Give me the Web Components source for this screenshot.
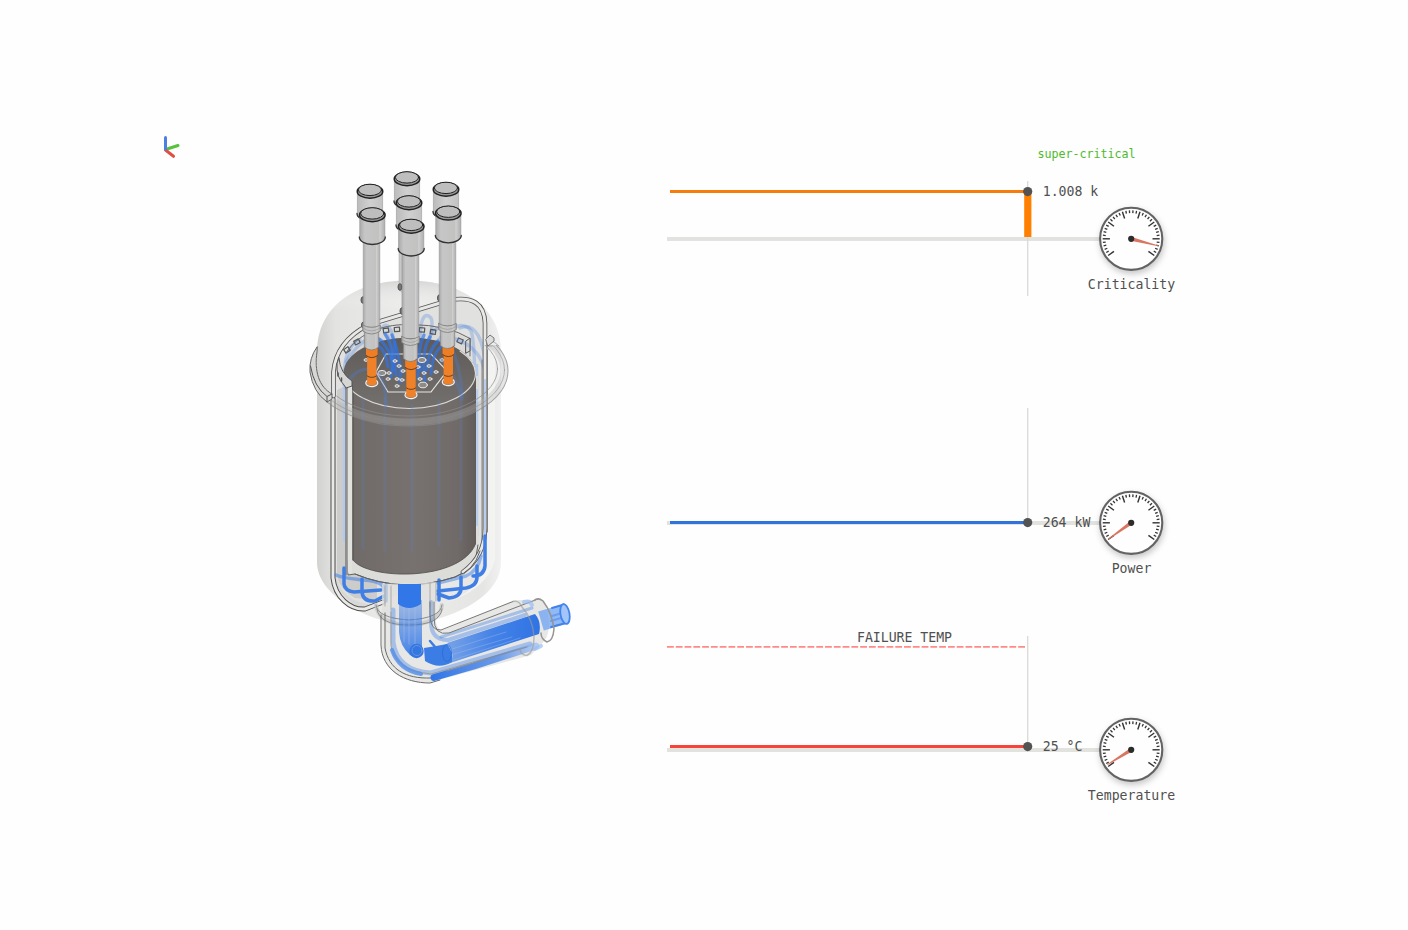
<!DOCTYPE html>
<html lang="en">
<head>
<meta charset="utf-8">
<title>Reactor startup</title>
<style>
    body {
        margin: 0;
        background: #fefefe;
        color: #505050;
        font-family: "DejaVu Sans Mono", "Liberation Mono", monospace;
        font-size: 13.2px;
    }
</style>
</head>
<body>
<reactor-dashboard>
    <reactor-model slot="model"></reactor-model>
    <trace-row height="160" base="99" level="51.5" color="#f67c0c" value="1.008 k" from="41" to="156" status="super-critical" bar>Criticality</trace-row>
    <trace-row height="170" base="115" level="114.5" color="#3173dd" value="264 kW" from="0" to="115">Power</trace-row>
    <trace-row height="180" base="120" level="116.5" color="#f9423a" value="25 °C" from="6" to="117" limit="16.8" limit-label="FAILURE TEMP">Temperature</trace-row>
</reactor-dashboard>

<script>
class ReactorDashboard extends HTMLElement {
    constructor() {
        super();
        this.shadowDOM = this.attachShadow({mode: "open"});
    }

    connectedCallback() {
        this.shadowDOM.innerHTML = `
        <style>
        :host {
            display: flex;
            box-sizing: border-box;
            width: 1408px;
            height: 930px;
            padding: 130px 0 0 150px;
            overflow: hidden;
        }

        .traces {
            display: flex;
            flex-direction: column;
            padding-top: 10px;
        }

        ::slotted(trace-row:nth-of-type(2)) {
            margin: 108px 0 52px;
        }
        </style>
        <slot name="model"></slot>
        <div class="traces"><slot></slot></div>
        `;
    }
}

class TraceRow extends HTMLElement {
    constructor() {
        super();
        this.shadowDOM = this.attachShadow({mode: "open"});
    }

    num(name) {
        return parseFloat(this.getAttribute(name));
    }

    connectedCallback() {
        const base = this.num("base");
        const level = this.num("level");
        const color = this.getAttribute("color");
        const angles = {Criticality: 14.7, Power: 144.5, Temperature: 148};
        const name = this.textContent.trim();

        let extra = "";
        if (this.hasAttribute("bar")) {
            extra += `<rect x="357.2" y="${level}" width="7.2" height="${base - level - 2}" fill="#ff7f00"/>`;
        }
        if (this.hasAttribute("status")) {
            extra += `<text x="370.6" y="18.4" class="status" textLength="98">${this.getAttribute("status")}</text>`;
        }
        if (this.hasAttribute("limit")) {
            const y = this.num("limit");
            extra += `<path d="M0 ${y}H358" stroke="#ff8a86" stroke-width="1.7" stroke-dasharray="6.8 1.98"/>
                <text x="190" y="${y - 4.6}" textLength="95">${this.getAttribute("limit-label")}</text>`;
        }

        this.shadowDOM.innerHTML = `
        <style>
        :host {
            display: flex;
            height: ${this.num("height")}px;
        }

        svg {
            flex: none;
            overflow: visible;
        }

        text {
            fill: #505050;
            font-family: inherit;
            font-size: 13.2px;
        }

        .status {
            fill: #4dbb2c;
            font-size: 11.7px;
        }

        gauge-dial {
            margin-top: ${base - 33}px;
        }
        </style>
        <svg width="420" height="${this.num("height")}" fill="none">
            <path d="M0 ${base}H434" stroke="#e2e2de" stroke-width="4"/>
            <path d="M360.7 ${this.num("from")}V${this.num("to")}" stroke="#dadad8" stroke-width="1.3"/>
            <path d="M3 ${level}H361" stroke="${color}" stroke-width="3.1"/>
            ${extra}
            <circle cx="360.7" cy="${level + .1}" r="4.6" fill="#535353"/>
            <text x="375.7" y="${level + 4.6}">${this.getAttribute("value")}</text>
        </svg>
        <gauge-dial angle="${angles[name]}"><slot></slot></gauge-dial>
        `;
    }
}

class GaugeDial extends HTMLElement {
    constructor() {
        super();
        this.shadowDOM = this.attachShadow({mode: "open"});
    }

    connectedCallback() {
        // 252 degree scale, every fifth tick is a long one
        let ticks = "";
        for (let i = 0; i <= 35; i++) {
            const major = i % 5 === 0;
            ticks += `<path d="M${major ? 21.3 : 25.7} 0H28.5" stroke-width="${major ? 1.4 : 1.3}" transform="rotate(${144 + i * 7.2})"/>`;
        }
        this.shadowDOM.innerHTML = `
        <style>
        :host {
            display: flex;
            flex-direction: column;
            align-items: center;
            width: 88px;
        }

        svg {
            flex: none;
            overflow: visible;
            filter: drop-shadow(1px 3px 3px rgba(0, 0, 0, .22));
        }

        .label {
            margin-top: 5px;
            padding-left: 1px;
            line-height: 16px;
            white-space: nowrap;
        }
        </style>
        <svg width="66" height="66" viewBox="-33.2 -32.8 66 66">
            <circle r="31.1" fill="#fefefe" stroke="#636363" stroke-width="2.1"/>
            <g stroke="#333">${ticks}</g>
            <path d="M0 -1.9L28 -.4V.4L0 1.9Z" fill="#d97560" transform="rotate(${this.getAttribute("angle")})"/>
            <circle r="3.1" fill="#2c2c2c"/>
        </svg>
        <div class="label"><slot></slot></div>
        `;
    }
}

class ReactorModel extends HTMLElement {
    constructor() {
        super();
        this.shadowDOM = this.attachShadow({mode: "open"});
    }

    // actuator can on top of a control rod, x/y is the middle of its lid
    can(x, y, back) {
        const body = back ? "url(#canBack)" : "url(#metal)";
        return `
        <path d="M${x - 12.6} ${y}V${y + 24}A12.6 6.5 0 0 0 ${x + 12.6} ${y + 24}V${y}Z" fill="${body}" stroke="#8b8b8b" stroke-width=".5"/>
        <path d="M${x - 13} ${y + 23}A13 7.5 0 0 0 ${x + 13} ${y + 23}" fill="none" stroke="#333" stroke-width="1.3"/>
        <ellipse cx="${x}" cy="${y + .9}" rx="12.8" ry="6.8" fill="#999" stroke="#222" stroke-width="1.4"/>
        <ellipse cx="${x}" cy="${y - .6}" rx="11.6" ry="5.7" fill="#bebebe" stroke="#222" stroke-width="1"/>`;
    }

    shaft(x, top, collar) {
        return `
        <path d="M${x - 8.3} ${top}V${collar}H${x + 8.3}V${top}Z" fill="url(#metal)" stroke="#929292" stroke-width=".5"/>
        <path d="M${x - 7.2} ${collar + 3}V${collar + 20}Q${x} ${collar + 26} ${x + 7.2} ${collar + 20}V${collar + 3}Z" fill="url(#metal)" stroke="#777" stroke-width=".6"/>
        <path d="M${x - 8.8} ${collar - 2}V${collar + 4}Q${x} ${collar + 10} ${x + 8.8} ${collar + 4}V${collar - 2}Q${x} ${collar + 3} ${x - 8.8} ${collar - 2}Z" fill="url(#metal)" stroke="#7c7c7c" stroke-width=".8"/>
        <path d="M${x - 8.5} ${collar + 1}Q${x} ${collar + 7} ${x + 8.5} ${collar + 1}" fill="none" stroke="#999" stroke-width=".7"/>`;
    }

    absorber(x, top) {
        return `
        <ellipse cx="${x}" cy="${top + 35}" rx="6" ry="3.6" fill="#8c8781" stroke="#f3f3f3" stroke-width="1.2" stroke-dasharray="2 .7"/>
        <path d="M${x - 5.8} ${top - 2}V${top + 8}Q${x} ${top + 11} ${x + 5.8} ${top + 8}V${top - 2}Z" fill="#ee7d23"/>
        <path d="M${x - 4.7} ${top + 9}V${top + 36}Q${x} ${top + 39} ${x + 4.7} ${top + 36}V${top + 9}Z" fill="#ef8128"/>
        <path d="M${x - 5.8} ${top + 7.5}Q${x} ${top + 12} ${x + 5.8} ${top + 7.5}M${x - 4.6} ${top + 28}Q${x} ${top + 31} ${x + 4.6} ${top + 28}M${x - 6} ${top - 1}Q${x} ${top + 3} ${x + 6} ${top - 1}" fill="none" stroke="#5c3c22" stroke-width=".9"/>`;
    }

    render() {
        // window slots around the rim behind the core
        const slots = [[347, 350, -35], [357, 342, -28], [386, 330.5, -8], [397, 329.5, -4], [422, 330, 4], [433, 332, 8], [460, 341, 24]]
            .map(([x, y, r]) => `<path d="M-2.6 -2.2H2.6V2H-2.6Z" transform="translate(${x} ${y}) rotate(${r})"/>`).join("");
        // channels in the core's top face
        const holes = [[395, 361], [422, 360, 4], [382, 373, 4], [389, 373], [397, 379], [388, 379], [424, 373], [436, 372], [430, 379], [420, 379], [397, 386], [423, 385, 4.3], [403, 371], [418, 367], [399, 366], [402, 380], [429, 366], [366, 360], [442, 360]]
            .map(([x, y, r = 2]) => `<ellipse cx="${x}" cy="${y}" rx="${r}" ry="${r * .65}"/>`).join("");

        this.shadowDOM.innerHTML = `
        <style>
        :host {
            display: block;
            flex: none;
            width: 517px;
        }

        svg {
            display: block;
        }
        </style>
        <svg width="517" height="570" viewBox="150 130 517 570" fill="none" stroke-linecap="round" stroke-linejoin="round">
            <defs>
                <linearGradient id="shell">
                    <stop offset="0" stop-color="#d2d2d1"/>
                    <stop offset=".1" stop-color="#e3e3e2"/>
                    <stop offset=".5" stop-color="#ececeb"/>
                    <stop offset=".9" stop-color="#e5e5e4"/>
                    <stop offset="1" stop-color="#f1f1f1"/>
                </linearGradient>
                <linearGradient id="metal">
                    <stop offset="0" stop-color="#aaa"/>
                    <stop offset=".2" stop-color="#c6c6c6"/>
                    <stop offset=".75" stop-color="#c2c2c1"/>
                    <stop offset=".8" stop-color="#cfcfcf"/>
                    <stop offset="1" stop-color="#aeaeae"/>
                </linearGradient>
                <linearGradient id="canBack">
                    <stop offset="0" stop-color="#bbb"/>
                    <stop offset=".5" stop-color="#d0d0d0"/>
                    <stop offset="1" stop-color="#c2c2c2"/>
                </linearGradient>
                <linearGradient id="core">
                    <stop offset="0" stop-color="#706b69"/>
                    <stop offset=".5" stop-color="#77726f"/>
                    <stop offset=".85" stop-color="#706b69"/>
                    <stop offset="1" stop-color="#625d5b"/>
                </linearGradient>
                <linearGradient id="face" x1="0" y1="0" x2="0" y2="1">
                    <stop offset="0" stop-color="#5d5a58"/>
                    <stop offset="1" stop-color="#74706e"/>
                </linearGradient>
                <linearGradient id="domeShade" x1="0" y1="0" x2="0" y2="1">
                    <stop offset="0" stop-color="#c8c8c8" stop-opacity=".6"/>
                    <stop offset=".4" stop-color="#fff" stop-opacity="0"/>
                </linearGradient>
                <linearGradient id="flow">
                    <stop offset="0" stop-color="#3b7de8" stop-opacity=".65"/>
                    <stop offset=".5" stop-color="#3277e7" stop-opacity=".9"/>
                    <stop offset="1" stop-color="#2f73e4"/>
                </linearGradient>
                <linearGradient id="flowLow" gradientUnits="userSpaceOnUse" x1="433" y1="0" x2="543" y2="0">
                    <stop offset="0" stop-color="#3277e7"/>
                    <stop offset=".6" stop-color="#4c87e8" stop-opacity=".8"/>
                    <stop offset="1" stop-color="#9dc0f5" stop-opacity=".6"/>
                </linearGradient>
                <linearGradient id="flowDown" x1="0" y1="0" x2="0" y2="1">
                    <stop offset="0" stop-color="#3c7ce4" stop-opacity=".4"/>
                    <stop offset="1" stop-color="#3277e7" stop-opacity=".9"/>
                </linearGradient>
                <clipPath id="flangeCut">
                    <path d="M327 440V402L332 399L400 345H520V440Z"/>
                </clipPath>
            </defs>

            <!-- axes -->
            <g stroke-width="3">
                <path d="M165.500 149.500L178 145.500" stroke="#57c23c"/>
                <path d="M165.500 150L173.500 156.300" stroke="#dc5146"/>
                <path d="M165.500 149V137.500" stroke="#4c7fe0"/>
            </g>

            <!-- outer vessel -->
            <path d="M317 352C317 306 356 280.500 408 280.500C460 280.500 501 306 501 352V562C501 594 462 616 409 626C362 620 317 594 317 562Z" fill="url(#shell)"/>
            <path d="M317 352C317 306 356 280.500 408 280.500C460 280.500 501 306 501 352Z" fill="url(#domeShade)"/>
            <path d="M331 396V562Q331 592 360 608L380 606L350 590L337 570V390Z" fill="#d8d8d7"/>
            <path d="M487 350V562Q480 592 440 605Q488 590 495 560V350Z" fill="#f3f3f2"/>

            <!-- interior seen through the cut -->
            <path d="M335 395C335 360 346 338 372 325L450 299Q484 293 485 326V538Q484 560 455 577L409 590L375 605Q337 602 336 570Z" fill="#e1e1e0"/>
            <path d="M337 390V574Q338 588 355 598L377 600V580L347 560V385Z" fill="#cccccb"/>
            <path d="M345 369Q352 332 409 325Q450 326 469 340V365Z" fill="#d9d9d8"/>

            <!-- coolant tubes behind the core -->
            <g stroke="#4b83df" stroke-opacity=".3" stroke-width="3.500">
                <path d="M344 385C343 355 350 344 360 340"/>
                <path d="M346 362C365 331 382 333 389 352"/>
                <path d="M382 328Q390 317 396 350"/>
                <path d="M421 352C418 318 425 311 431 318C434 324 430 340 424 357"/>
                <path d="M426 350C430 327 443 320 448 340"/>
                <path d="M430 354C444 325 465 320 471 331Q475 340 475 400"/>
                <path d="M460 328C475 322 485 340 485 370V538"/>
            </g>
            <path d="M344 388V540M477 365V535" stroke="#b5c9ea" stroke-width="2.500"/>
            <g stroke="#555" stroke-width="1.200">${slots}</g>
            <path d="M346 353C360 331 386 324 411 324.500Q448 325 470 338.500V356M466 343V353" stroke="#666"/>
            <path d="M466 341L470 338L470 351L466 353Z" fill="#d8d8d7" stroke="#555"/>

            <!-- core -->
            <path d="M348 376V575L355 574Q403 594 455 577Q477 568 478 540V376Z" fill="#dcdcd9"/>
            <path d="M348 376V575L355 574Q403 594 455 577Q477 568 478 545" stroke="#626262"/>
            <path d="M353 373V560C368 580 460 582 475.500 544V373Z" fill="url(#core)" stroke="#4f4b49" stroke-width=".8"/>
            <ellipse cx="409.500" cy="373" rx="66" ry="35.500" fill="url(#face)"/>
            <path d="M343.500 373A66 35.500 0 0 0 475.500 373Q475 361 460 351" stroke="#deddd9" stroke-width="1.100"/>
            <g stroke="#5b83cc" stroke-opacity=".2" stroke-width="3">
                <path d="M385 398V550M412 405V550M439 401V545M461 390V540M363 398V548"/>
            </g>
            <path d="M386 354H431L447 371L431 392H388L376 372Z" stroke="#e8e8e8" stroke-width="1.100" stroke-dasharray="3 .5"/>

            <!-- tubes entering the core -->
            <g stroke="#2f74e8" stroke-opacity=".68" stroke-width="3.200">
                <path d="M378 345Q386 351 388 367"/>
                <path d="M379 339Q392 350 393 370"/>
                <path d="M385 334Q396 350 391 377"/>
                <path d="M392 335Q402 360 400 382"/>
                <path d="M395 342Q394 360 396 375"/>
                <path d="M424 335Q416 352 421 370"/>
                <path d="M430 337Q421 350 425 382"/>
                <path d="M438 341Q428 350 427 370"/>
                <path d="M443 345Q432 353 431 374"/>
                <path d="M418 358V378"/>
            </g>
            <g stroke="#e9e9e8" stroke-width="1" fill="#8e8b88">${holes}</g>
            <g stroke="#4b83df" stroke-opacity=".28" stroke-width="3.500">
                <path d="M346 388Q352 368 372 369"/>
                <path d="M368 369Q386 370 386 405M385 333Q396 345 391 359"/>
                <path d="M450 345Q461 365 462 399M440 359Q455 372 462 399"/>
                <path d="M450 337Q478 345 484 368"/>
            </g>

            <!-- cut face of the inner and outer walls -->
            <path d="M333 399V578C335 597 350 610 365 609L383 602" stroke="#4d4d4d" stroke-width="5"/>
            <path d="M333 399V578C335 597 350 610 365 609L383 602" stroke="#e9e9e7" stroke-width="3"/>
            <path d="M333.500 396V372C335 352 347 336 368 325L450 300Q484 294 485 323V528Q485 556 463 572" stroke="#555" stroke-width="4.600"/>
            <path d="M333.500 396V372C335 352 347 336 368 325L450 300Q484 294 485 323V528Q485 556 463 572" stroke="#e8e8e6" stroke-width="2.900"/>
            <path d="M337 364Q339 378 346 385V575" stroke="#555"/>
            <path d="M350 386V572" stroke="#e1e1de" stroke-width="4"/>
            <path d="M352.700 386V560" stroke="#555" stroke-width=".8"/>
            <path d="M339 358Q340 373 352 381V386L346 388L344 385Q336 377 337 364Z" fill="#d6d6d4" stroke="#555"/>
            <path d="M338 373V376M341.500 378V381" stroke="#555" stroke-width="1.500"/>
            <path d="M485 380V535M477 390V525" stroke="#b9cdef" stroke-width="2"/>
            <path d="M482 360V540M487.500 350V532" stroke="#6d6d6d" stroke-width=".8"/>

            <!-- flange -->
            <g clip-path="url(#flangeCut)">
                <ellipse cx="409" cy="370.500" rx="95" ry="51.500" stroke="#b2b2b0" stroke-opacity=".32" stroke-width="7"/>
                <ellipse cx="409" cy="371" rx="99" ry="55" stroke="#8a8a8a" stroke-opacity=".75" stroke-width="1.100"/>
                <ellipse cx="409" cy="370" rx="95.500" ry="52" stroke="#8c8c8a" stroke-opacity=".55"/>
                <ellipse cx="409" cy="369" rx="88.500" ry="47" stroke="#8c8c8a" stroke-opacity=".7"/>
            </g>
            <path d="M490 340Q495 342 499 346M487 346H492" stroke="#8c8c8a" stroke-opacity=".7"/>
            <path d="M486 339L490 335L494 338V341L488 346Z" stroke="#777" fill="#ddd"/>
            <path d="M317 347Q309 358 310 372Q313 392 327 402L332 399V394C319 387 314 371 317 352Z" fill="#d7d7d6" stroke="#666"/>
            <path d="M310.500 366Q314 387 327 396.500L332 394M327 397V402" stroke="#555"/>

            <!-- headers under the core -->
            <g stroke="#3f7fe5" stroke-width="3.500">
                <path d="M344 568V584Q345 591 354 592L381 590"/>
                <path d="M362 579V592Q363 602 375 601L384 596"/>
                <path d="M336 575Q342 578 364 580T384 591" stroke-opacity=".55"/>
                <path d="M386 585V601M439 580V600"/>
                <path d="M461 577V588Q461 597 449 598L438 594"/>
                <path d="M477 566V577Q477 586 466 588L438 591"/>
                <path d="M485 536V566Q484 576 473 576" />
                <path d="M438 583L466 576Q478 571 481 556" stroke-opacity=".5"/>
            </g>
            <path d="M355 574Q403 594 455 577Q474 571 480 551" stroke="#616161"/>

            <!-- outlet pipe -->
            <path d="M382 584V648C385 672 403 684 431 682L531 655L545 640Q554 625 543 600L515 600L443 630Q435 630 436 617V582Z" fill="#dfdfdd" fill-opacity=".75"/>
            <path d="M376 605Q378 624 409 625Q440 624 442 605" stroke="#c5c5c3" stroke-width="4" opacity=".7"/>
            <path d="M376 605Q377 618 409 620Q441 618 442 605M377 609Q379 625 409 625Q440 625 442 609" stroke="#8c8c8a"/>
            <g stroke="#357bea" stroke-opacity=".36">
                <path d="M393 610V642Q397 671 431 673L530 644" stroke-width="5"/>
                <path d="M431 602V622Q431 640 448 640L525 615" stroke-width="4"/>
                <path d="M441 637L532 608" stroke-width="3"/>
            </g>
            <path d="M399 600H422V651Q417 660 410 655Q400 646 399 632Z" fill="url(#flowDown)"/>
            <path d="M404 606V642M409 604V644M415 604V644" stroke="#a9c4ef" stroke-width=".8" stroke-opacity=".6"/>
            <path d="M398 584V604Q409 612 421 604V584Z" fill="#3277e7"/>
            <path d="M385 586V606M391 586V609M430 583V607M436 583V601" stroke="#aaaaa8"/>
            <path d="M381 615V645C382 670 404 683 430 683L440 680M385 613V648C389 669 405 679 431 678" stroke="#686866"/>
            <path d="M430 602V614Q430 631 441 630L513 601.500M434 602V618Q434 636 449 633L538 599" stroke="#777"/>
            <path d="M447 643L535 614Q542 622 539 634L450 663Q456 655 447 643Z" fill="url(#flow)"/>
            <path d="M452 649L506 632M454 654L512 637M453 660L520 638" stroke="#a3c1ee" stroke-width=".7" opacity=".55"/>
            <path d="M424 648Q437 646 447 644Q453 650 452 662Q439 670 425 661Z" fill="#3b7ce5"/>
            <path d="M430 641L436 648" stroke="#3b7ce5" stroke-width="2.500"/>
            <ellipse cx="447" cy="653" rx="4.500" ry="8.500" stroke="#286ad5" stroke-opacity=".7"/>
            <circle cx="416.500" cy="651" r="7.200" fill="#3377e2"/>
            <circle cx="417" cy="650.500" r="5" stroke="#6594dc" stroke-width="1"/>
            <path d="M391 612V646Q395 670 431 674L526 647" stroke="#9d9d99"/>
            <path d="M434 677.500L474 666L536 646" stroke="url(#flowLow)" stroke-width="7"/>
            <path d="M392 650Q399 670 421 674" stroke="#5890e6" stroke-width="4" stroke-opacity=".85"/>
            <path d="M447 671L527 647" stroke="#8a8f99" stroke-width=".9"/>

            <!-- pipe end -->
            <path d="M513 601.500Q519 600 522 607Q533 619 534 637Q534 652 527 655.500Q521 655 520 650" stroke="#9b9b99" stroke-opacity=".6" stroke-width="1.500"/>
            <path d="M524 602Q530 600 532 605M535 649L541 646" stroke="#9abef3" stroke-width="4" stroke-opacity=".7"/>
            <path d="M541 621L565 614" stroke="#6ca1f2" stroke-width="20" stroke-linecap="butt" opacity=".75"/>
            <path d="M552 608L564 604.500M551 627L566 623" stroke="#4383e9" stroke-width="2"/>
            <path d="M552 616L562 613M551 621L561 618" stroke="#4383e9" stroke-opacity=".5" stroke-width="2"/>
            <ellipse cx="565" cy="614" rx="4.500" ry="10" transform="rotate(-10 565 614)" fill="#a4c5f7" stroke="#4285ee" stroke-width="1.800"/>
            <path d="M534 600.500Q538 597 543 601Q552 613 554 629Q553 641 547 642Q541 639 541 633" stroke="#949492" stroke-width="1.500"/>

            <!-- control rods, back to front -->
            <path d="M399 200V290L405 294V200ZM402 240V313H408V240Z" fill="#c8c8c7" stroke="#a0a0a0" stroke-width=".5"/>
            <g fill="#777" stroke="#555">
                <ellipse cx="400" cy="287" rx="2" ry="3.300"/>
                <ellipse cx="363" cy="300" rx="2" ry="3.300"/>
                <ellipse cx="439.500" cy="298" rx="2" ry="3.300"/>
                <ellipse cx="402" cy="311" rx="2" ry="3.300"/>
                <ellipse cx="363.500" cy="325" rx="2" ry="3"/>
            </g>
            ${this.can(407, 178, true)}
            ${this.can(370, 190.5, true)}
            ${this.can(446, 188.5, true)}
            ${this.can(409, 202, true)}
            ${this.absorber(371.8, 348)}
            ${this.absorber(448.3, 347)}
            ${this.absorber(411, 360)}
            ${this.shaft(371.5, 236, 327)}
            ${this.shaft(447.5, 234, 325.5)}
            ${this.can(372.3, 214, false)}
            ${this.can(448.3, 212.3, false)}
            ${this.shaft(410.5, 247, 338.5)}
            ${this.can(411.2, 225.5, false)}
        </svg>
        `;
    }

    connectedCallback() {
        this.render();
    }
}

customElements.define('reactor-dashboard', ReactorDashboard);
customElements.define('reactor-model', ReactorModel);
customElements.define('gauge-dial', GaugeDial);
customElements.define('trace-row', TraceRow);
</script>
</body>
</html>
